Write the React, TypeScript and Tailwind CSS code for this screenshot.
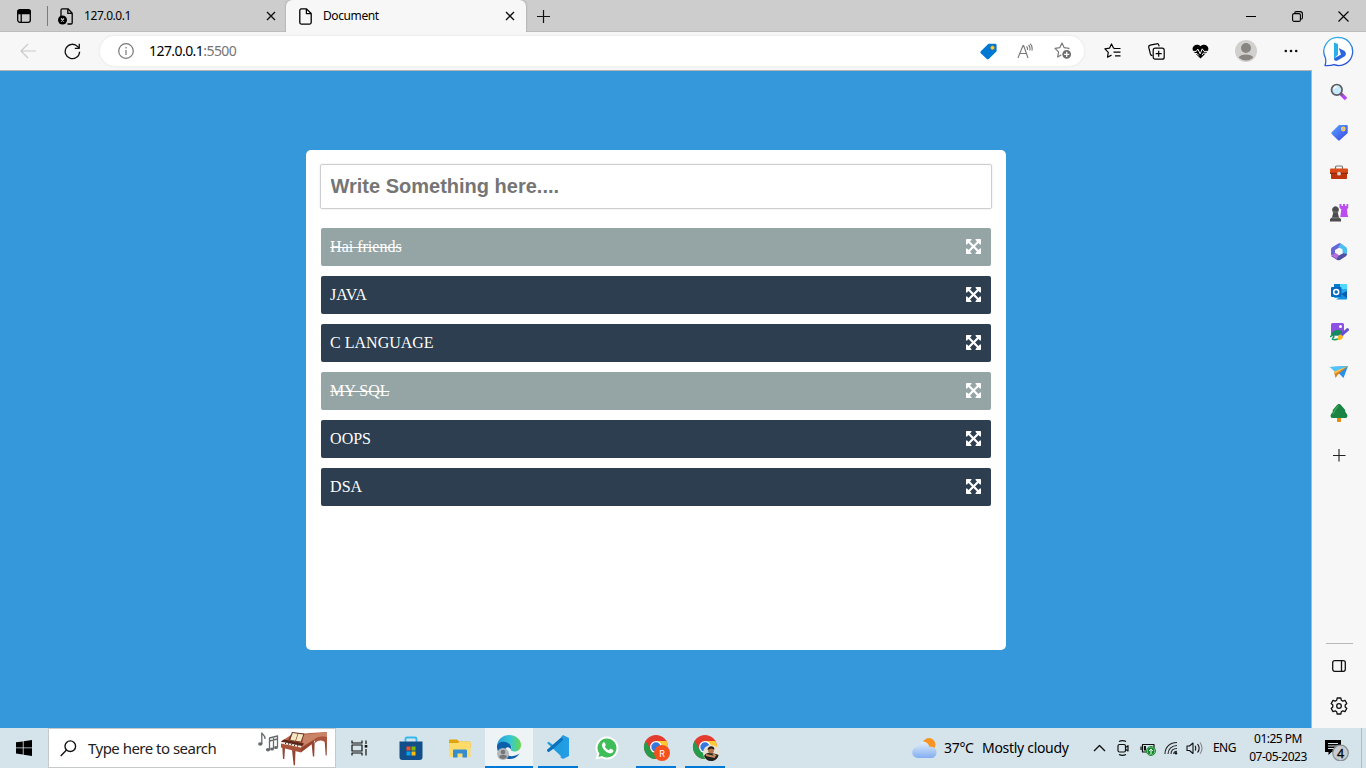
import React from "react";

type SlotProps = { className: string; children?: React.ReactNode };

function Slot({ className, children }: SlotProps) {
  return <div className={`flex shrink-0 items-center justify-center ${className}`}>{children}</div>;
}

type IcoProps = { w: number; h?: number; stroke?: string; sw?: number; children: React.ReactNode };

function Ico({ w, h = w, stroke = "none", sw = 1.2, children }: IcoProps) {
  return (
    <svg
      width={w}
      height={h}
      viewBox={`0 0 ${w} ${h}`}
      fill="none"
      stroke={stroke}
      strokeWidth={sw}
      strokeLinejoin="round"
      className="block shrink-0"
    >
      {children}
    </svg>
  );
}

const Cross = () => (
  <Ico w={10} stroke="#111" sw={1.4}>
    <path d="M1 1l8 8M9 1l-8 8" />
  </Ico>
);

function TabStrip() {
  return (
    <div className="flex h-8 items-center bg-[#cdcdcd] shadow-[inset_0_-1px_0_#bdbdbd]">
      <Slot className="w-[47px] pl-px">
        <Ico w={14} stroke="#000" sw={1.3}>
          <rect x=".7" y=".7" width="12.6" height="12.6" rx="2.2" />
          <path d="M1 1.5h12v3H1z" fill="#000" />
          <path d="M4.2 4v9" />
        </Ico>
      </Slot>
      <div className="h-5 w-px bg-[#7b7b7b]" />
      <div className="flex h-8 w-[238px] items-center pl-[10px]">
        <Ico w={16} h={17} stroke="#000" sw={1.3}>
          <path d="M3 8V2.2C3 1.2 3.5.8 4.3.8H10l4.2 4.4v9.6c0 .8-.5 1.2-1.3 1.2H9.5M9.8 1v4.4H14" />
          <circle cx="4.5" cy="12" r="4.5" fill="#000" stroke="none" />
          <path d="M3 10.500l3 3M6 10.500l-3 3" stroke="#ccc" />
        </Ico>
        <span className="ml-[10px] grow text-xs tracking-[-0.42px]">127.0.0.1</span>
        <div className="mr-[10px]">
          <Cross />
        </div>
      </div>
      <div className="flex h-8 w-[240px] items-center rounded-t-md bg-[#f7f7f7] pl-[13px] shadow-[0_0_2px_#888]">
        <Ico w={13} h={17} stroke="#000" sw={1.3}>
          <path d="M2.200.900h5.300l4.700 4.600v9.100c0 .900-.600 1.500-1.500 1.500H2.200c-.900 0-1.400-.600-1.400-1.500V2.400C.800 1.500 1.300.900 2.200.900zM7.400 1v4.600h4.600" />
        </Ico>
        <span className="ml-[11px] grow text-xs tracking-[-0.4px]">Document</span>
        <div className="mr-[11px]">
          <Cross />
        </div>
      </div>
      <Slot className="w-[35px]">
        <Ico w={15} stroke="#111">
          <path d="M7.500 1v13M1 7.500h13" />
        </Ico>
      </Slot>
      <div className="grow" />
      <Slot className="w-[46px]">
        <Ico w={10} stroke="#000" sw={1}>
          <path d="M0 5.500h10" />
        </Ico>
      </Slot>
      <Slot className="w-[46px]">
        <Ico w={11} stroke="#000" sw={1.1}>
          <rect x=".6" y="2.600" width="7.800" height="7.800" rx="1.500" />
          <path d="M2.700 2.500C2.700 1 3.300.600 4.200.600h4c1.400 0 2.200.800 2.200 2.200v4c0 1-.6 1.500-1.700 1.500" />
        </Ico>
      </Slot>
      <Slot className="w-[46px]">
        <Ico w={11} stroke="#000" sw={1.1}>
          <path d="M.5.5l10 10M10.500.5l-10 10" />
        </Ico>
      </Slot>
    </div>
  );
}

const starPath = "M8 1l2.100 4.600 4.900.700-3.600 3.600.9 5L8 12.500 3.700 15l.9-5.100L1 6.300l4.900-.7z";

function Toolbar() {
  return (
    <div className="flex h-[39px] items-center border-b border-[#b5b5b5] bg-[#f7f7f7]">
      <Slot className="w-[56px]">
        <Ico w={16} stroke="#c9c9c9">
          <path d="M16 8H1M8 1L1 8l7 7" />
        </Ico>
      </Slot>
      <Slot className="w-8">
        <Ico w={17} stroke="#111" sw={1.3}>
          <path d="M15.600 8.700A7.200 7.200 0 1 1 13.700 3.600L15 5M15.300.800v4.500h-4.500" />
        </Ico>
      </Slot>
      <div className="ml-3 flex h-[30px] w-[984px] shrink-0 items-center rounded-full bg-white shadow-[0_0_3px_#e2e2e2]">
        <Slot className="w-[49px] pl-[3px]">
          <Ico w={16} stroke="#777">
            <circle cx="8" cy="8" r="7.300" />
            <path d="M8 7v5M8 4v1.500" />
          </Ico>
        </Slot>
        <span className="grow text-sm tracking-[-0.56px] text-black">
          127.0.0.1<span className="text-[#757575]">:5500</span>
        </span>
        <Slot className="w-9">
          <Ico w={17}>
            <path d="M8.500.700h6.500c1 0 1.600.700 1.600 1.600v6L9 15.700c-.8.700-1.600.700-2.400 0L1 10.500c-.8-.8-.8-1.700 0-2.400z" fill="#0078d4" />
            <circle cx="12.500" cy="4.700" r="2" fill="#ffd13b" stroke="#8b7b30" strokeWidth=".5" />
          </Ico>
        </Slot>
        <Slot className="w-9 pl-0.5">
          <Ico w={16} stroke="#777" sw={1.1}>
            <path d="M1 15L6 2.500h.6L11 15M3 10.500h6.400M9.500 3.500c1 1 1.200 2 .900 3.500M11.500 2c1.500 1.500 1.800 3.500 1.200 5.500M13.200.700c1.900 2.100 2.300 4.500 1.700 7" />
          </Ico>
        </Slot>
        <Slot className="w-[42px] pr-px">
          <Ico w={18} stroke="#777">
            <path d={starPath} />
            <circle cx="12.700" cy="12.300" r="5" fill="#6e6e6e" stroke="#fff" />
            <path d="M12.700 9.700v5.200M10.100 12.300h5.200" stroke="#fff" />
          </Ico>
        </Slot>
      </div>
      <Slot className="ml-[6px] w-11">
        <Ico w={17} stroke="#000" sw={1.2}>
          <path d="M11.200 5.700L9.500 5 7.500 1 5.600 5.100.900 5.900l3.400 3.400-.8 4.900 4-2.100M10.500 5.500h6M9.500 9.200h7M11 12.800h5.500" />
        </Ico>
      </Slot>
      <Slot className="w-11">
        <Ico w={17} stroke="#000" sw={1.200}>
          <rect x="5.200" y="5.200" width="11" height="11" rx="2" />
          <path d="M10.700 7.700v6M7.700 10.700h6M4.500 12.500c-1.300.2-1.800-.5-2.100-1.500L.800 4.600C.5 3.300 1 2.500 2.200 2.200L8.500.800c1.200-.3 2 .2 2.300 1.300l.4 1.300" />
        </Ico>
      </Slot>
      <Slot className="w-11">
        <Ico w={17} h={15}>
          <path d="M8.500 14.500L1.700 7.700C-2.100 3 4.300-1.800 8.500 2.200 12.700-1.800 19 3 15.300 7.700z" fill="#000" />
          <path d="M0 7.400h4.200l1.700-2.300 2.300 4.700 2-5 1.800 2.600h5M3 9.500h2l1.700 1.900M10 11.200l1.200-2h3" stroke="#f7f7f7" strokeWidth="1" />
        </Ico>
      </Slot>
      <Slot className="w-[47px]">
        <Ico w={22}>
          <circle cx="11" cy="11" r="11" fill="#d2d0ce" />
          <circle cx="11" cy="8" r="5" fill="#898581" />
          <path d="M3.700 17.500c1.500-4.100 13.100-4.100 14.600 0a10.500 10.500 0 0 1-14.600 0z" fill="#898581" />
        </Ico>
      </Slot>
      <Slot className="w-[43px]">
        <Ico w={14} h={4}>
          <circle cx="1.800" cy="2" r="1.300" fill="#111" />
          <circle cx="7" cy="2" r="1.300" fill="#111" />
          <circle cx="12.200" cy="2" r="1.300" fill="#111" />
        </Ico>
      </Slot>
    </div>
  );
}

function SideRail() {
  const cell = "h-10 w-[54px]";
  return (
    <aside className="flex w-[55px] shrink-0 flex-col items-center border-l border-[#b5b5b5] bg-[#f7f7f7] pt-px">
      <Slot className={cell}>
        <Ico w={18}>
          <path d="M11 11l5 5" stroke="#b646f1" strokeWidth="3.500" />
          <path d="M10 10l2.500 2.500" stroke="#666" strokeWidth="2" />
          <circle cx="6.800" cy="6.800" r="5.300" fill="#c8e8fb" stroke="#5d5d5f" strokeWidth="1.700" />
          <path d="M4 6a3 3 0 0 1 3-2.300" stroke="#fff" />
        </Ico>
      </Slot>
      <Slot className={cell}>
        <Ico w={17}>
          <defs>
            <linearGradient id="tag" x2="1" y2="1">
              <stop stopColor="#5baafd" />
              <stop offset="1" stopColor="#373fe5" />
            </linearGradient>
          </defs>
          <path d="M8 1h7.500c.8 0 1.200.5 1.200 1.200V9L9 16c-.7.700-1.400.7-2.100 0L.900 10.300c-.7-.7-.7-1.500 0-2.200z" fill="url(#tag)" />
          <circle cx="12.300" cy="5" r="1.800" fill="#b8b8c8" stroke="#ffd044" strokeWidth="1.200" />
        </Ico>
      </Slot>
      <Slot className={cell}>
        <Ico w={18} h={14}>
          <path d="M5.500 4V2c0-.6.400-1 1-1h5c.6 0 1 .4 1 1v2" stroke="#777" strokeWidth="1.200" />
          <rect y="3.500" width="18" height="5.500" rx="1" fill="#d84a16" />
          <path d="M1 8.500h16V13c0 .6-.4 1-1 1H2c-.6 0-1-.4-1-1z" fill="#bd340c" />
          <path d="M0 8.300h18" stroke="#8e260b" />
          <circle cx="9" cy="8.700" r="1.900" fill="#d5d5d5" />
        </Ico>
      </Slot>
      <Slot className={cell}>
        <Ico w={20} h={19}>
          <path d="M10.500 1h2v2h1.500V1h2v2h1.500V1h1.700v4l-1.200 1.300.4 5 .9 2.700h-8l1-7.700L10.500 5z" fill="#bd4df0" />
          <path d="M3.700 8.500a3.300 3.300 0 1 1 5.600 0v1H8.700l1.300 5 2 1.500v2.500H1V16l2-1.500 1.300-5h-.6z" fill="#4c4c4e" />
          <path d="M4 9h5M3 14.800h7" stroke="#777" />
        </Ico>
      </Slot>
      <Slot className={cell}>
        <Ico w={18}>
          <path d="M8 .8L2.500 3.900C1.600 4.500 1 5.400 1 6.500v5.300l4 2.300V7l6-3.600V.8C10.500.2 9 .2 8 .8z" fill="#6766d8" />
          <path d="M11 .6l4.500 3.100c1 .6 1.500 1.500 1.500 2.600v5.500l-4.500-2.300V6.300L8 4z" fill="#4bbff0" />
          <path d="M17 11c-.2 1.200-.6 2-1.500 2.500L10 17c-1 .5-2 .4-2.800 0L1 13l4.500-2.700L9 12.500l4.500-2.600z" fill="#4d50a6" />
          <path d="M1.300 12.500L5.500 10 9 12.500 6.500 16z" fill="#b570d7" />
        </Ico>
      </Slot>
      <Slot className={cell}>
        <Ico w={18}>
          <rect x="4" y="1" width="13" height="14" rx="1" fill="#28a8ea" />
          <path d="M10 1h7v5h-7z" fill="#50d9ff" />
          <path d="M4 1h6v5H4z" fill="#0878cb" />
          <path d="M6 16.500L17 10v5.500c0 .6-.4 1-1 1H7z" fill="#1490df" />
          <path d="M11 11l6 4V8z" fill="#0f5dad" />
          <rect x="1" y="4" width="10.500" height="10" rx="1" fill="#0668c2" />
          <circle cx="6.200" cy="9" r="2.500" stroke="#fff" strokeWidth="1.500" />
        </Ico>
      </Slot>
      <Slot className={cell}>
        <Ico w={19}>
          <rect x="1" width="13" height="12.500" rx="1.500" fill="#8e50e3" />
          <circle cx="10.500" cy="3.500" r="1.500" fill="#fff" />
          <path d="M1 11c4-5 7-5 11-3l-1 4.500H2z" fill="#138a5e" />
          <path d="M0 14c3-3 5-1 3 1s2 2 5 1" stroke="#139860" strokeWidth="1.500" />
          <path d="M11.500 12l6-5.300" stroke="#674fd5" strokeWidth="3" strokeLinecap="round" />
          <path d="M8 17c-1-3 1-6 3-5.500l2 2C13 16 10.500 17.500 8 17z" fill="#ffb51d" />
        </Ico>
      </Slot>
      <Slot className={cell}>
        <Ico w={18} h={15}>
          <path d="M0 2L18 1l-4.500 12L9.500 9z" fill="#2790e8" />
          <path d="M0 2L18 1 5.500 7.500z" fill="#52c3f8" />
          <path d="M5.500 7.500L18 1 8 9.500 5.500 13 4 6.500z" fill="#dc8418" />
          <path d="M4 6.700L18 1 5.500 8.500z" fill="#ffc04d" />
        </Ico>
      </Slot>
      <Slot className={cell}>
        <Ico w={18} h={19}>
          <path d="M7 13h4v5c0 .6-.5 1-1 1H8c-.6 0-1-.4-1-1z" fill="#e88910" />
          <path d="M9 1c1 0 1.600.7 2.200 1.300l3.600 4.200c.6.700.6 1.300.3 1.900l2 3c1 1.900-.3 3.700-2 3.700H2.900c-1.700 0-3-1.800-2-3.700l2-3c-.3-.6-.3-1.200.3-1.900l3.600-4.200C7.400 1.700 8 1 9 1z" fill="#198443" />
          <path d="M8.500 2.500L5 7l-1.800 4" stroke="#43ac58" />
        </Ico>
      </Slot>
      <Slot className="mt-[3px] h-10 w-[54px]">
        <Ico w={13} stroke="#222" sw={1.1}>
          <path d="M6 0v12.500M0 6.500h12.500" />
        </Ico>
      </Slot>
      <div className="grow" />
      <div className="h-px w-[27px] bg-[#b8b8b8]" />
      <Slot className="mt-[2px] h-10 w-[54px]">
        <Ico w={14} h={12} stroke="#111" sw={1.3}>
          <rect x=".7" y=".7" width="12.600" height="10.600" rx="2" />
          <path d="M9.500 1v10" />
        </Ico>
      </Slot>
      <Slot className="mb-0.5 h-10 w-[54px]">
        <Ico w={18} stroke="#111" sw={1.3}>
          <path d="M7.200 1h3.600l.5 2.200 1.500.9L15 3.400l1.800 3.100L15.200 8v2l1.600 1.500-1.800 3.100-2.200-.7-1.500.9-.5 2.200H7.200l-.5-2.200-1.500-.9-2.200.7-1.800-3.100L2.800 10V8L1.200 6.500 3 3.400l2.200.7 1.500-.9z" />
          <circle cx="9" cy="9" r="2.300" />
        </Ico>
      </Slot>
    </aside>
  );
}

function ExpandArrows() {
  return (
    <svg width="15" height="15" viewBox="0 0 1536 1536" fill="currentColor" className="mb-px block shrink-0">
      <path
        transform="matrix(1 0 0 -1 0 1408)"
        d="M1283 995l-355 -355l355 -355l144 144q29 31 70 14q39 -17 39 -59v-448q0 -26 -19 -45t-45 -19h-448q-42 0 -59 40q-17 39 14 69l144 144l-355 355l-355 -355l144 -144q31 -30 14 -69q-17 -40 -59 -40h-448q-26 0 -45 19t-19 45v448q0 42 40 59q39 17 69 -14l144 -144l355 355l-355 355l-144 -144q-19 -19 -45 -19q-12 0 -24 5q-40 17 -40 59v448q0 26 19 45t45 19h448q42 0 59 -40q17 -39 -14 -69l-144 -144l355 -355l355 355l-144 144q-31 30 -14 69q17 40 59 40h448q26 0 45 -19t19 -45v-448q0 -42 -39 -59q-13 -5 -25 -5q-26 0 -45 19z"
      />
    </svg>
  );
}

const todos = [
  { text: "Hai friends", done: true },
  { text: "JAVA", done: false },
  { text: "C LANGUAGE", done: false },
  { text: "MY SQL", done: true },
  { text: "OOPS", done: false },
  { text: "DSA", done: false },
];

function TodoPage() {
  return (
    <main className="flex grow items-start justify-center bg-[#3498db] pt-[79px]">
      <section className="h-[500px] w-[700px] rounded-[5px] bg-white p-[14px]">
        <input
          className="block h-[45px] w-full rounded-[2px] border border-[#ccced0] pl-[10px] font-['Liberation_Sans',Arial,sans-serif] text-xl font-bold shadow-[0_0_2px_#ddd] outline-none placeholder:text-[#757575]"
          placeholder="Write Something here...."
        />
        <ul className="mx-px mt-[19px] flex flex-col gap-[10px] font-['Liberation_Serif',serif] text-base text-white">
          {todos.map((t) => (
            <li
              key={t.text}
              className={`flex h-[38px] items-center justify-between rounded-[2px] pl-[9.6px] pr-[10px] ${
                t.done ? "bg-[#95a5a6] line-through" : "bg-[#2c3e50]"
              }`}
            >
              <span>{t.text}</span>
              <ExpandArrows />
            </li>
          ))}
        </ul>
      </section>
    </main>
  );
}

function Chrome({ children }: { children: React.ReactNode }) {
  return (
    <Ico w={28}>
      <circle cx="13" cy="13" r="12" fill="#e33b2e" />
      <path d="M2.600 7A12 12 0 0 0 13 25l5.200-9H7.800z" fill="#269b4b" />
      <path d="M23.400 7A12 12 0 0 1 13 25l5.200-9L13 7z" fill="#fcc934" />
      <circle cx="13" cy="13" r="6" fill="#fff" />
      <circle cx="13" cy="13" r="4.700" fill="#3477e0" />
      {children}
    </Ico>
  );
}

function Taskbar() {
  return (
    <footer className="flex h-10 shrink-0 items-center bg-[#d5e3ea]">
      <Slot className="w-12">
        <Ico w={16}>
          <path d="M0 2.300l6.800-.9v6.100H0zM7.600 1.300L16 0v7.500H7.600zM0 8.300h6.800v6.200L0 13.600zM7.600 8.300H16V16l-8.400-1.300z" fill="#000" />
        </Ico>
      </Slot>
      <div className="flex h-10 w-[288px] items-center border border-[#c5c9ca] bg-white pl-[11px]">
        <Ico w={17} stroke="#111" sw={1.4}>
          <circle cx="10.300" cy="6.200" r="5.300" />
          <path d="M6.500 10L.7 16" />
        </Ico>
        <span className="ml-[11px] w-[168px] shrink-0 whitespace-nowrap text-[15px] tracking-[-0.52px] text-[#222]">
          Type here to search
        </span>
        <Ico w={74} h={36}>
          <path d="M5.800 14V3c1 2.500 4 2.500 3 6M13.500 19.500V8l8-2v11M13.500 11l8-2M17.500 8v11" stroke="#65696c" strokeWidth="1.300" />
          <ellipse cx="4.300" cy="14" rx="2.200" ry="1.800" fill="#65696c" />
          <ellipse cx="12" cy="19.700" rx="2.100" ry="1.700" fill="#65696c" />
          <ellipse cx="16" cy="19" rx="2" ry="1.600" fill="#65696c" />
          <ellipse cx="20" cy="17.500" rx="2" ry="1.600" fill="#65696c" />
          <path d="M36 20l3.500.3L39 35.300h-1.300zM26.300 17l2.700 1-.7 11H27zM55.500 13l3.200-1-.5 14.500h-1.300zM68.500 9l2.500-1-.3 17.500h-1z" fill="#8f4633" />
          <path d="M25 11.500L35 5l19-2 17-1v12c-3-5-9-7-13-2.500L45 22z" fill="#b9634a" />
          <path d="M47 5l24-3v5c-5-1-10-1-14 3l-10 6z" fill="#c98468" />
          <path d="M59 9c4-3 8-3 12-2v7c-3-4-8-5-12-1z" fill="#a9543c" />
          <path d="M25 11.500l3-2 20 4-3 4z" fill="#5b2519" />
          <path d="M27.500 12l18.500 4-1.300 1.800-18.400-4z" fill="#f3e8da" />
          <path d="M30 12.300l-.7 1.800M33 13l-.7 1.700M36 13.700l-.7 1.700M39 14.300l-.7 1.700M42 15l-.7 1.700" stroke="#2a1714" strokeWidth=".9" />
          <path d="M25 13.500l20 4.500V22.500l-20-5z" fill="#a9523a" />
          <path d="M45 18l13-8v2.500L45 22.500z" fill="#974430" />
          <path d="M36 2l12.500 1.500-3 9L32.500 10z" fill="#6c3020" />
          <path d="M36.700 3l5 .8-2.400 7-5-1zM42.300 3.800l5 .7-2.500 7-4.900-.7z" fill="#f7e8c4" />
        </Ico>
      </div>
      <Slot className="w-[50px] pr-[3px]">
        <Ico w={17} h={16} stroke="#111" sw={1.2}>
          <path d="M1 .5V3h10V.5M1 15.500V13h10v2.500M1 5h10v6H1zM15 .5V4M15 9v6.500" />
          <path d="M13.700 5h2.600v2.600h-2.600z" fill="#111" stroke="none" />
        </Ico>
      </Slot>
      <Slot className="h-10 w-[49px]">
        <Ico w={24} h={25}>
          <path d="M6.500 6V3c0-1 .5-1.500 1.500-1.500h8c1 0 1.500.5 1.500 1.500v3" stroke="#35b8ef" strokeWidth="1.800" />
          <path d="M.5 5.500h23V21c0 1.700-1 3-2.700 3H3.200c-1.700 0-2.700-1.300-2.700-3z" fill="#124e89" />
          <path d="M7.500 10.500h4v4h-4z" fill="#f25022" />
          <path d="M12.500 10.500h4v4h-4z" fill="#7fba00" />
          <path d="M7.500 15.500h4v4h-4z" fill="#00a4ef" />
          <path d="M12.500 15.500h4v4h-4z" fill="#ffb900" />
        </Ico>
      </Slot>
      <Slot className="h-10 w-[50px] pr-px">
        <Ico w={22} h={19}>
          <path d="M0 1.500C0 .7.500.5 1.200.5H8l2 2h10c1 0 1.500.5 1.500 1.300V9H0z" fill="#e2a40b" />
          <path d="M0 4h9l1.700-1.500h9.600c.8 0 1.200.4 1.200 1.200V18H0z" fill="#ffdc69" />
          <path d="M4 18.500V12c0-1 .5-1.500 1.500-1.500h11c1 0 1.500.5 1.500 1.500v6.500h-4.500v-4h-5v4z" fill="#358cd0" />
        </Ico>
      </Slot>
      <Slot className="h-10 w-12 border-b-2 border-[#0078d7] bg-[#eef3f6]">
        <Ico w={26}>
          <defs>
            <linearGradient id="edge" x2="1">
              <stop stopColor="#249bd8" />
              <stop offset=".55" stopColor="#36c7d7" />
              <stop offset="1" stopColor="#69da48" />
            </linearGradient>
          </defs>
          <path d="M1 12C1.500 5 7 1 13 1c7 0 12 4.500 12 10 0 4-2.700 6.500-6.500 6.500-2.500 0-4-1-3.500-2.200 3.500-5-7-9-14-3.300z" fill="url(#edge)" />
          <path d="M1 12c1-4 6-5.300 10-3.500 4 1.900 5 4.700 4 6.800-4-5-7.500.5-5 4 2 3 7 4.500 13.500.2C20.500 24 17 25 13 25 6 25 .7 19.500 1 12z" fill="#0c5faa" />
          <circle cx="7" cy="20" r="6" fill="#b4b8bb" />
          <circle cx="7" cy="18" r="2.300" fill="#777" />
          <path d="M3 23c1-3 7-3 8 0-2 2.500-6 2.500-8 0z" fill="#777" />
        </Ico>
      </Slot>
      <Slot className="h-10 w-[49px]">
        <Slot className="h-10 w-10 border-b-2 border-[#0078d7]">
          <Ico w={24}>
            <path d="M17 1L7 10 2.700 6.800 1 8l16 15z" fill="#209ce0" />
            <path d="M1 16l1.700 1.300L7 14 17 5V1L1 14.700z" fill="#0873bb" />
            <path d="M17 0l6 3v18l-6 3-3-2 3-2V4l-2-2z" fill="#239ee5" />
          </Ico>
        </Slot>
      </Slot>
      <Slot className="h-10 w-[49px]">
        <Ico w={24}>
          <path d="M12 .5a11.500 11.500 0 1 1-5.500 21.600L.5 23.500l1.600-5.700A11.500 11.500 0 0 1 12 .5z" fill="#fff" />
          <path d="M12 2.500a9.500 9.500 0 1 1-5 17.600l-3.600.9 1-3.400A9.500 9.500 0 0 1 12 2.500z" fill="#3fbd58" />
          <path d="M8.200 6.500c.7-.6 1.400-.4 1.700.3l.8 1.900c.2.600-.1 1-.9 1.900 1 1.900 2.200 3 4 3.700l1.200-1.300c.4-.5.800-.3 1.200-.1l1.900 1c.7.400.3 1.900-.5 2.600-1.800 1.600-4.800.5-7.300-1.600-2.600-2.200-4.700-5.800-2.100-8.400z" fill="#fff" />
        </Ico>
      </Slot>
      <Slot className="h-10 w-[49px]">
        <Slot className="h-10 w-10 border-b-2 border-[#0078d7] pl-0.5 pt-0.5">
          <Chrome>
            <circle cx="19" cy="19" r="8" fill="#f4511e" />
            <text x="19" y="22.500" textAnchor="middle" fontSize="9" fill="#fff" fontFamily="Roboto, sans-serif">
              R
            </text>
          </Chrome>
        </Slot>
      </Slot>
      <Slot className="h-10 w-[49px]">
        <Slot className="h-10 w-10 border-b-2 border-[#0078d7] pl-0.5 pt-0.5">
          <Chrome>
            <circle cx="19" cy="19" r="8" fill="#e9e2d5" />
            <path d="M12 22c3-5 8-3 14.500-1-.8 4-4 6-7.500 6s-5.500-2-7-5z" fill="#20211f" />
            <circle cx="19" cy="16.500" r="3" fill="#b5774e" />
            <path d="M15.500 16c0-5 7-5 7-.5l-3.500-1z" fill="#291c17" />
            <path d="M14 21l9 2M21 20l3 2" stroke="#c68b5d" strokeWidth="1.800" />
          </Chrome>
        </Slot>
      </Slot>
      <div className="grow" />
      <Ico w={26} h={24}>
        <defs>
          <linearGradient id="cloud" y2="1" x2="0">
            <stop stopColor="#e2eefc" />
            <stop offset="1" stopColor="#82aef0" />
          </linearGradient>
        </defs>
        <circle cx="17" cy="8.500" r="6.500" fill="#f79424" />
        <path d="M6 22a5.500 5.500 0 0 1-.5-11C6.500 4 16 4 17.500 11c3-.8 7 1 7 5.500 0 3.500-2.500 5.500-5.500 5.500z" fill="url(#cloud)" />
      </Ico>
      <span className="ml-[6px] w-[38px] whitespace-nowrap text-sm tracking-[-0.3px]">37°C</span>
      <span className="w-[105px] whitespace-nowrap text-sm tracking-[-0.3px]">Mostly cloudy</span>
      <Slot className="w-6">
        <Ico w={13} h={8} stroke="#111" sw={1.4}>
          <path d="M1 7l5.500-5.500L12 7" />
        </Ico>
      </Slot>
      <Slot className="w-6">
        <Ico w={12} h={16} stroke="#111" sw={1.2}>
          <rect x="1" y="4.500" width="7.500" height="7.500" rx="1.500" />
          <path d="M8.500 7.500l2.500-1.800v5.200L8.500 9.300M2 1.500c2-1 5-1 7 0M2 14.500c2 1 5 1 7 0" />
        </Ico>
      </Slot>
      <Slot className="w-6 pl-px pt-px">
        <Ico w={16} h={14} stroke="#111" sw={1.2}>
          <path d="M2.500 2.500H14V10H2.500zM1 4.500v3.500" />
          <path d="M4 4h2v4.500H4z" fill="#111" stroke="none" />
          <circle cx="11" cy="9" r="4.500" fill="#fff" stroke="#12892c" strokeWidth="1" />
          <circle cx="11" cy="9" r="3.700" fill="#12892c" stroke="none" />
          <path d="M11 12V7M9.200 9l1.800-2 1.800 2" stroke="#fff" strokeWidth="1" />
        </Ico>
      </Slot>
      <Slot className="w-6">
        <Ico w={14} stroke="#222" sw={1.1}>
          <path d="M1 13C1 6 6 1.500 13 1.500M4 13c0-5 4-8.500 9-8.500M7 13c0-3.500 2.500-5.500 6-5.500M9.700 13c.1-1.800 1.300-2.800 3.300-2.800" />
          <circle cx="12" cy="12.300" r="1.200" fill="#111" stroke="none" />
        </Ico>
      </Slot>
      <Slot className="w-[23px]">
        <Ico w={17} h={14} stroke="#111" sw={1.1}>
          <path d="M1 5h2.500L7 2v10.500L3.500 9.500H1zM9 5c1 1 1 3.500 0 4.500M11.500 3c2 2.500 2 6 0 8.500" />
          <path d="M14 1.500c2.500 3.500 2.500 8 0 11.500" stroke="#888" />
        </Ico>
      </Slot>
      <span className="ml-[7px] w-[27px] whitespace-nowrap text-xs tracking-[-0.55px]">ENG</span>
      <div className="flex h-10 w-[76px] flex-col items-center whitespace-nowrap pt-[2px] text-xs leading-[18px] tracking-[-0.5px]">
        <span>01:25 PM</span>
        <span>07-05-2023</span>
      </div>
      <div className="flex h-10 w-[45px] items-center pl-[9px]">
        <Ico w={26} h={26}>
          <path d="M0 5h16v12H6.500L3.500 20v-3H0z" fill="#000" />
          <path d="M3 8.500h10M3 11h10M3 13.500h7" stroke="#d5e3ea" />
          <circle cx="15.500" cy="18" r="7.800" fill="#c6cccf" stroke="#898e91" />
          <text x="15.500" y="22.500" textAnchor="middle" fontSize="12.500" fill="#000" stroke="#000" strokeWidth=".3" fontFamily="Noto Sans, sans-serif">
            4
          </text>
        </Ico>
      </div>
      <div className="mr-1 h-10 w-px bg-[#aebbc2]" />
    </footer>
  );
}

function BingBadge() {
  return (
    <Slot className="h-[39px] w-[54px] bg-[#f7f7f7]">
      <Ico w={32}>
        <defs>
          <linearGradient id="bing" y2="1" x2=".3">
            <stop stopColor="#35b8ee" />
            <stop offset="1" stopColor="#2853d9" />
          </linearGradient>
        </defs>
        <path d="M16 1.500a14 14 0 1 1-5 27.200c-2.700 1-5.600 1-9 .9 1.200-2.700 1-4.200.5-7.500A14 14 0 0 1 16 1.500z" fill="#fff" stroke="url(#bing)" strokeWidth="1.300" />
        <path d="M11 6.500l4 1.500v10.500l-4 4.500z" fill="#29b0ea" />
        <path d="M15.700 12l5.500 2.700c2 1.300 2.300 4 .6 5.500L14.500 24.500c-2 .9-3.500-.2-3.500-2l7-4z" fill="#2868dc" />
      </Ico>
    </Slot>
  );
}

export default function App() {
  return (
    <div className="flex h-[768px] w-[1366px] flex-col overflow-hidden font-['Noto_Sans',sans-serif] text-black">
      <TabStrip />
      <div className="flex bg-[#f7f7f7]">
        <div className="w-[1312px]">
          <Toolbar />
        </div>
        <BingBadge />
      </div>
      <div className="flex grow">
        <TodoPage />
        <SideRail />
      </div>
      <Taskbar />
    </div>
  );
}
